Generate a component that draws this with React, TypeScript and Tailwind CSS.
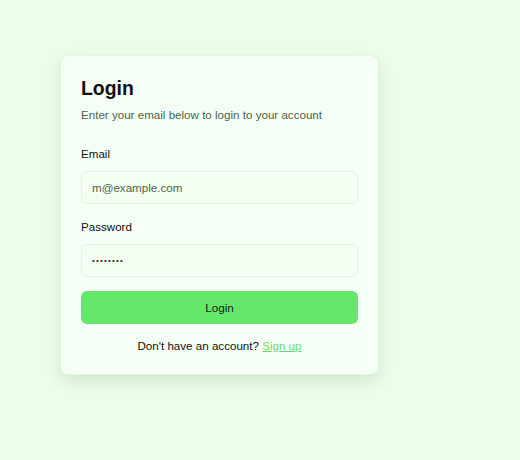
import React from 'react';

const App = () => {
  return (
    <div className="min-h-[460px] bg-[#edfdea] pl-[60px] pt-[55px] font-['Liberation_Sans',Arial,sans-serif]">
      {/* Login card */}
      <div className="w-[319px] rounded-lg border border-[#e3f5e1] bg-[#f6fff5] p-5 shadow-[0_6px_16px_rgba(60,110,60,0.16)]">
        <h1 className="text-[19.4px] font-bold leading-6 text-[#111]">Login</h1>
        <p className="mt-[7px] text-[11.6px] leading-4 text-[#4a654a]">
          Enter your email below to login to your account
        </p>

        <form className="mt-[23px]" onSubmit={(e) => e.preventDefault()}>
          <label className="block text-[11.6px] leading-4 text-[#111]">Email</label>
          <input
            type="email"
            placeholder="m@example.com"
            className="mt-[9px] h-[33px] w-full rounded-md border border-[#e2f3df] bg-[#f4fef2] px-[10px] text-[11.6px] text-[#222] placeholder:text-[#4a654a] outline-none"
          />

          <label className="mt-[15px] block text-[11.6px] leading-4 text-[#111]">Password</label>
          <input
            type="password"
            defaultValue="password"
            className="mt-[9px] h-[33px] w-full rounded-md border border-[#e2f3df] bg-[#f4fef2] px-[10px] text-[8px] tracking-[1.2px] text-[#333] outline-none"
          />

          <button
            type="submit"
            className="mt-[14px] h-[33px] w-full rounded-md bg-[#65e76a] text-[11.6px] text-[#0b260d]"
          >
            Login
          </button>
        </form>

        <p className="mt-[14px] text-center text-[11.6px] leading-4 text-[#111]">
          Don't have an account?{' '}
          <a href="#" className="text-[#6ed873] underline">
            Sign up
          </a>
        </p>
      </div>
    </div>
  );
};

export default App;
